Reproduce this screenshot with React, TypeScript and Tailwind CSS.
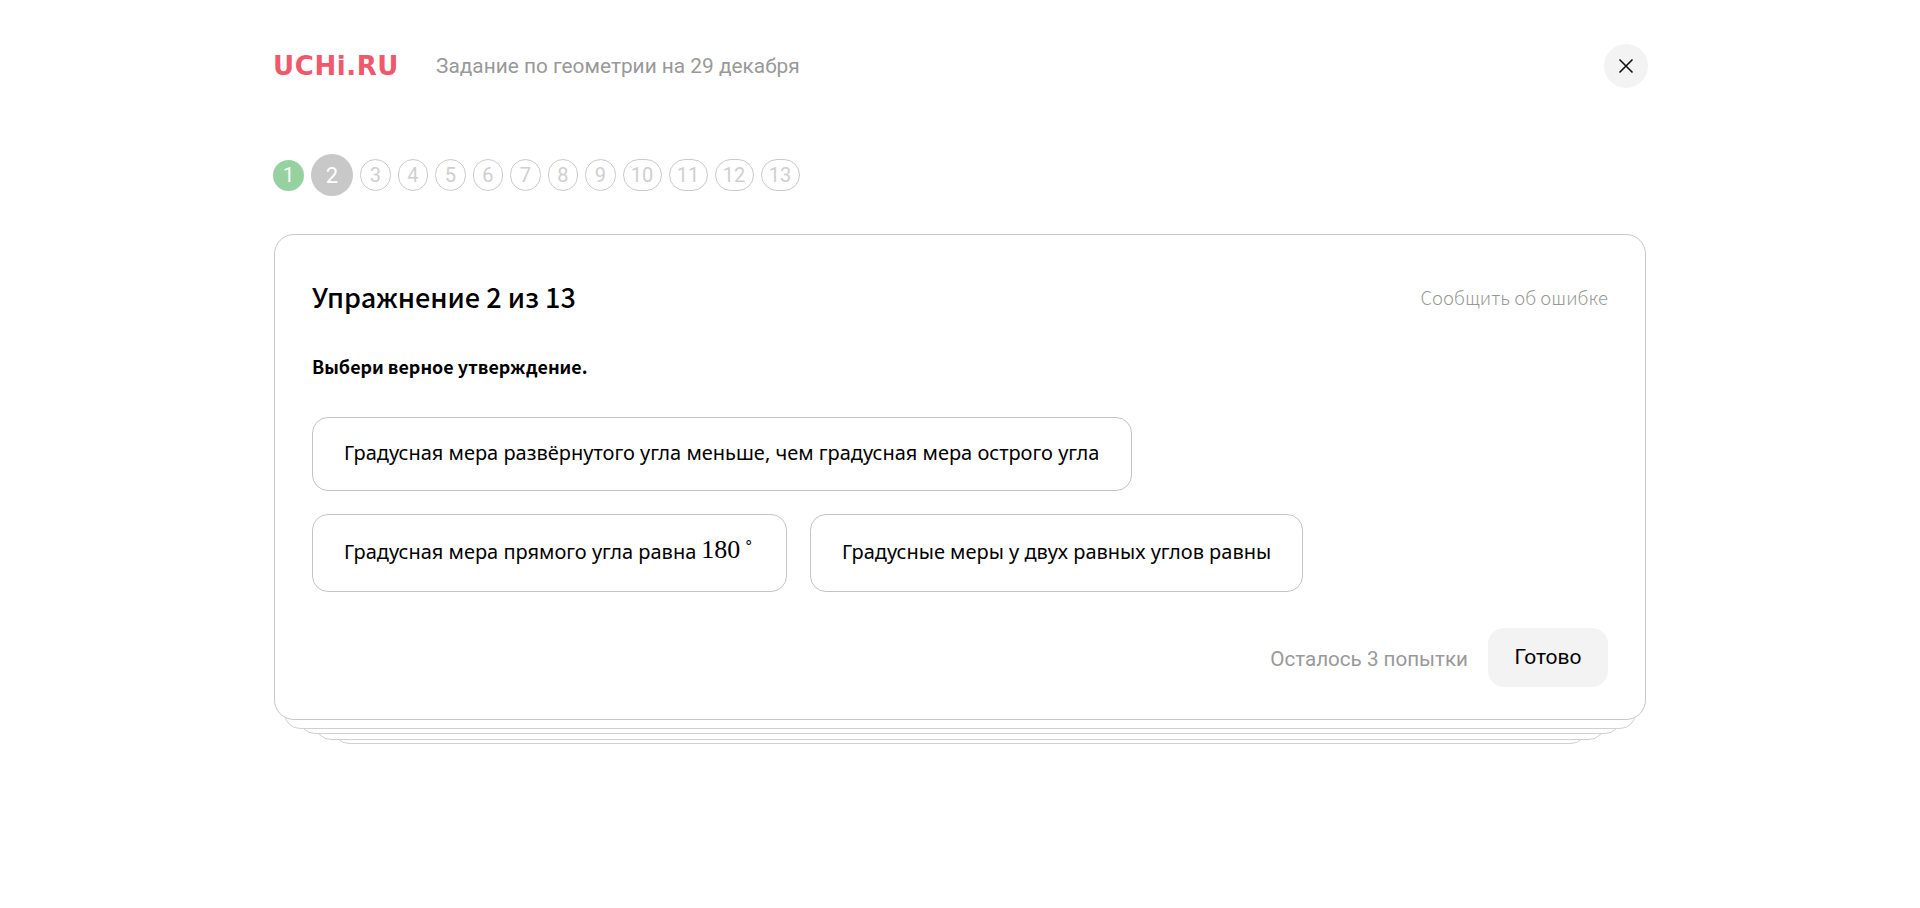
const Num = ({ n, wide }: { n: number; wide?: boolean }) => (
  <div className={`flex h-[32px] items-center justify-center rounded-full border border-[#cacaca] text-[20px] text-[#cfcfcf] ${wide ? "w-[39px]" : "w-[30.5px]"}`}>{n}</div>
);

const Option = ({ children, className }: { children: React.ReactNode; className: string }) => (
  <div className={`flex items-center whitespace-nowrap rounded-[16px] border border-[#c4c4c4] pl-[31px] text-[20px] text-black ${className}`}>{children}</div>
);

const CJK = { fontFamily: '"Noto Sans CJK SC", sans-serif' };
const Roboto = { fontFamily: "Roboto, sans-serif" };

export default function App() {
  return (
    <div className="min-h-[908px] bg-white pl-[273px] pr-[274px]" style={{ fontFamily: '"Noto Sans", sans-serif' }}>
      <header className="flex h-[132px] items-center">
        <div className="w-[163px] text-[26px] font-bold leading-none tracking-[0.6px] text-[#f2586c]" style={{ fontFamily: '"DejaVu Sans", sans-serif' }}>UCHi.RU</div>
        <div className="mt-[2px] text-[20.85px] text-[#999999]" style={Roboto}>Задание по геометрии на 29 декабря</div>
        <button className="-mr-[2px] ml-auto flex h-[44px] w-[44px] items-center justify-center rounded-full bg-[#f3f3f3]">
          <svg width="16" height="16" viewBox="0 0 16 16" stroke="#111" strokeWidth="1.6" fill="none"><path d="M1.5 1.5 14.5 14.5M14.5 1.5 1.5 14.5" /></svg>
        </button>
      </header>
      <div className="mt-[22px] flex h-[42px] items-center gap-[7px]" style={Roboto}>
        <div className="flex h-[31px] w-[31px] items-center justify-center rounded-full bg-[#96d2a0] text-[20px] text-white">1</div>
        <div className="flex h-[42px] w-[42px] items-center justify-center rounded-full bg-[#c8c8c8] text-[22px] text-white">2</div>
        {[3, 4, 5, 6, 7, 8, 9].map((n) => <Num key={n} n={n} />)}
        {[10, 11, 12, 13].map((n) => <Num key={n} n={n} wide />)}
      </div>
      <main className="ml-[1px] mt-[38px]">
        <section className="relative z-10 h-[486px] rounded-[20px] border border-[#c8c8c8] bg-white pl-[37px] pr-[37px] pt-[42px]">
          <div className="flex items-center justify-between">
            <h1 className="text-[27px] font-medium leading-[40px] text-black" style={CJK}>Упражнение 2 из 13</h1>
            <span className="mt-[1px] text-[18.5px] font-light text-[#999999]" style={CJK}>Сообщить об ошибке</span>
          </div>
          <p className="mt-[36px] text-[17.9px] font-bold leading-[26px] text-black" style={CJK}>Выбери верное утверждение.</p>
          <div className="mt-[38px] flex flex-col gap-[23px]">
            <Option className="h-[74px] w-[820px] pb-[2px]">Градусная мера развёрнутого угла меньше, чем градусная мера острого угла</Option>
            <div className="flex gap-[23px]">
              <Option className="h-[78px] w-[475px] pb-[3px]">
                Градусная мера прямого угла равна
                <span className="mb-[4px] ml-[5px] text-[26px]" style={{ fontFamily: '"Liberation Serif", serif' }}>180<sup className="ml-[4px] align-[4px] text-[15px]">∘</sup></span>
              </Option>
              <Option className="h-[78px] w-[493px] pb-[3px]">Градусные меры у двух равных углов равны</Option>
            </div>
          </div>
          <div className="mt-[36px] flex items-center justify-end gap-[20px]">
            <span className="mt-[4px] text-[20.6px] text-[#999999]" style={Roboto}>Осталось 3 попытки</span>
            <button className="h-[59px] w-[120px] rounded-[16px] bg-[#f3f3f3] text-[21px] text-black" style={Roboto}>Готово</button>
          </div>
        </section>
        <div className="relative z-[9] mx-[10px] -mt-[22px] h-[31px] rounded-b-[16px] border border-[#d0d0d0] bg-white" />
        <div className="relative z-[8] mx-[25px] -mt-[26px] h-[31px] rounded-b-[16px] border border-[#d0d0d0] bg-white" />
        <div className="relative z-[7] mx-[41px] -mt-[25px] h-[31px] rounded-b-[16px] border border-[#d0d0d0] bg-white" />
        <div className="relative z-[6] mx-[59px] -mt-[27px] h-[31px] rounded-b-[16px] border border-[#d0d0d0] bg-white" />
      </main>
    </div>
  );
}
